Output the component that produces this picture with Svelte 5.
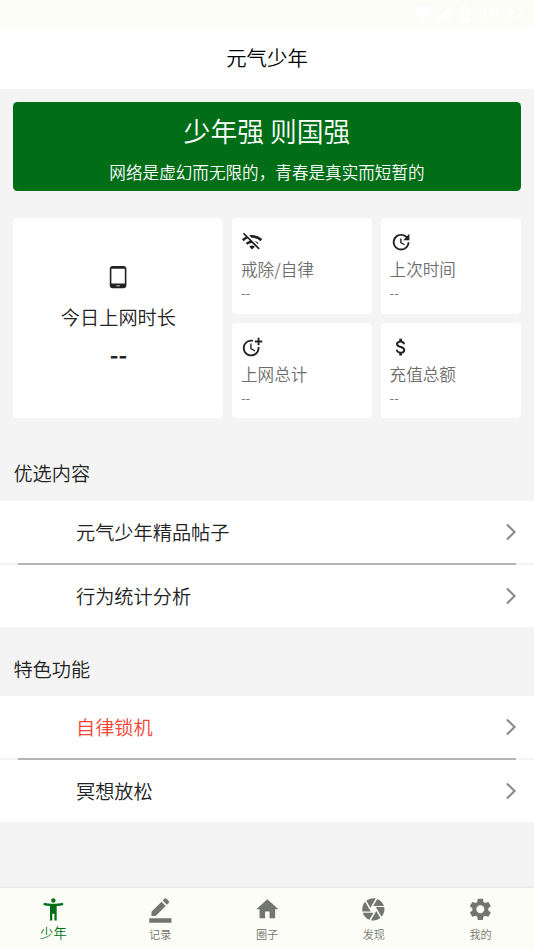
<script lang="ts">
	const icons = {
		tablet:
			'M18 0H6C4.34 0 3 1.34 3 3v18c0 1.66 1.34 3 3 3h12c1.66 0 3-1.34 3-3V3c0-1.66-1.34-3-3-3zm-4 22h-4v-1h4v1zm5.25-3H4.75V3h14.5v16z',
		wifiOff:
			'M22.99 9C19.15 5.16 13.8 3.76 8.84 4.78l2.52 2.52c3.47-.17 6.99 1.05 9.63 3.7l2-2zm-4 4c-1.29-1.29-2.84-2.13-4.49-2.56l3.53 3.53.96-.97zM2 3.05L5.07 6.1C3.6 6.82 2.22 7.78 1 9l1.99 2c1.24-1.24 2.67-2.16 4.2-2.77l2.24 2.24C7.81 10.89 6.27 11.73 5 13v.01L6.99 15c1.36-1.36 3.14-2.04 4.92-2.06L18.98 20l1.27-1.26L3.29 1.79 2 3.05zM9 17l3 3 3-3c-1.65-1.66-4.34-1.66-6 0z',
		update:
			'M21 10.12h-6.78l2.74-2.82c-2.73-2.7-7.15-2.8-9.88-.1-2.73 2.71-2.73 7.08 0 9.79s7.15 2.71 9.88 0C18.32 15.65 19 14.08 19 12.1h2c0 1.98-.88 4.55-2.64 6.29-3.51 3.48-9.21 3.48-12.72 0-3.5-3.47-3.53-9.11-.02-12.58s9.14-3.47 12.65 0L21 3v7.12zM12.5 8v4.25l3.5 2.08-.72 1.21L11 13V8h1.5z',
		moreTime:
			'M10 8v6l4.7 2.9.8-1.2-4-2.4V8zM17.92 12c.05.33.08.66.08 1 0 3.9-3.1 7-7 7s-7-3.1-7-7c0-3.9 3.1-7 7-7 .7 0 1.37.1 2 .29V4.23c-.64-.15-1.31-.23-2-.23-5 0-9 4-9 9s4 9 9 9 9-4 9-9c0-.34-.02-.67-.06-1h-2.02zM20 5V2h-2v3h-3v2h3v3h2V7h3V5z',
		money:
			'M11.8 10.9c-2.27-.59-3-1.2-3-2.15 0-1.09 1.01-1.85 2.7-1.85 1.78 0 2.44.85 2.5 2.1h2.21c-.07-1.72-1.12-3.3-3.21-3.81V3h-3v2.16c-1.94.42-3.5 1.68-3.5 3.61 0 2.31 1.91 3.46 4.7 4.13 2.5.6 3 1.48 3 2.41 0 .69-.49 1.79-2.7 1.79-2.06 0-2.87-.92-2.98-2.1h-2.2c.12 2.19 1.76 3.42 3.68 3.83V21h3v-2.15c1.95-.37 3.5-1.5 3.5-3.55 0-2.84-2.43-3.81-4.7-4.4z',
		chevron: 'M6.23 20.23L8 22l10-10L8 2 6.23 3.77 14.46 12z',
		person:
			'M20.5 6c-2.61.7-5.67 1-8.5 1s-5.89-.3-8.5-1L3 8c1.86.5 4 .83 6 1v13h2v-6h2v6h2V9c2-.17 4.14-.5 6-1l-.5-2zM12 6c1.1 0 2-.9 2-2s-.9-2-2-2-2 .9-2 2 .9 2 2 2z',
		pencil:
			'M22 24H2v-4h20v4zM13.06 5.19l3.75 3.75L7.75 18H4v-3.75l9.06-9.06zm4.82 2.68l-3.75-3.75 1.83-1.83c.39-.39 1.02-.39 1.41 0l2.34 2.34c.39.39.39 1.02 0 1.41l-1.83 1.83z',
		home: 'M10 20v-6h4v6h5v-8h3L12 3 2 12h3v8z',
		camera:
			'M9.4 10.5l4.77-8.26C13.47 2.09 12.75 2 12 2c-2.4 0-4.6.85-6.32 2.25l3.66 6.35.06-.1zM21.54 9c-.92-2.92-3.15-5.26-6-6.34L11.88 9h9.66zm.26 1h-7.49l.29.5 4.76 8.25C21 16.97 22 14.61 22 12c0-.69-.07-1.35-.2-2zM8.54 12l-3.9-6.75C3.01 7.03 2 9.39 2 12c0 .69.07 1.35.2 2h7.49l-1.15-2zm-6.08 3c.92 2.92 3.15 5.26 6 6.34L12.12 15H2.46zm11.27 0l-3.9 6.76c.7.15 1.42.24 2.17.24 2.4 0 4.6-.85 6.32-2.25l-3.66-6.35-.93 1.6z',
		settings:
			'M19.14 12.94c.04-.3.06-.61.06-.94 0-.32-.02-.64-.07-.94l2.03-1.58c.18-.14.23-.41.12-.61l-1.92-3.32c-.12-.22-.37-.29-.59-.22l-2.39.96c-.5-.38-1.03-.7-1.62-.94l-.36-2.54c-.04-.24-.24-.41-.48-.41h-3.84c-.24 0-.43.17-.47.41l-.36 2.54c-.59.24-1.13.57-1.62.94l-2.39-.96c-.22-.08-.47 0-.59.22L2.74 8.87c-.12.21-.08.47.12.61l2.03 1.58c-.05.3-.09.63-.09.94s.02.64.07.94l-2.03 1.58c-.18.14-.23.41-.12.61l1.92 3.32c.12.22.37.29.59.22l2.39-.96c.5.38 1.03.7 1.62.94l.36 2.54c.05.24.24.41.48.41h3.84c.24 0 .44-.17.47-.41l.36-2.54c.59-.24 1.13-.56 1.62-.94l2.39.96c.22.08.47 0 .59-.22l1.92-3.32c.12-.22.07-.47-.12-.61l-2.01-1.58zM12 15.6c-1.98 0-3.6-1.62-3.6-3.6s1.62-3.6 3.6-3.6 3.6 1.62 3.6 3.6-1.62 3.6-3.6 3.6z'
	};

	const stats = [
		{ icon: icons.wifiOff, label: '戒除/自律', value: '--' },
		{ icon: icons.update, label: '上次时间', value: '--' },
		{ icon: icons.moreTime, label: '上网总计', value: '--' },
		{ icon: icons.money, label: '充值总额', value: '--' }
	];

	const sections = [
		{
			title: '优选内容',
			items: [{ text: '元气少年精品帖子' }, { text: '行为统计分析' }]
		},
		{
			title: '特色功能',
			items: [{ text: '自律锁机', danger: true }, { text: '冥想放松' }]
		}
	];

	const tabs = [
		{ icon: icons.person, label: '少年' },
		{ icon: icons.pencil, label: '记录' },
		{ icon: icons.home, label: '圈子' },
		{ icon: icons.camera, label: '发现' },
		{ icon: icons.settings, label: '我的' }
	];
	let active = $state(0);
</script>

{#snippet icon(path: string)}
	<svg viewBox="0 0 24 24" fill="currentColor" aria-hidden="true"><path d={path} /></svg>
{/snippet}

<div class="app">
	<div class="status-bar">
		<svg class="signal" viewBox="0 0 58 20" fill="currentColor">
			<path d="M0 5.5Q10 -2 20 5.5L10 18z" />
			<path d="M37 2v16H21z" />
			<path d="M50 1h4v1.5h3V18H47V2.5h3zM53 5l-3 6h2v4l3.5-6h-2.5z" fill-rule="evenodd" />
		</svg>
		<span>10:22</span>
	</div>
	<header>元气少年</header>

	<main>
		<div class="banner">
			<div class="banner-title">少年强 则国强</div>
			<div class="banner-text">网络是虚幻而无限的，青春是真实而短暂的</div>
		</div>

		<div class="overview">
			<div class="card today">
				{@render icon(icons.tablet)}
				<div class="today-label">今日上网时长</div>
				<div class="today-value">--</div>
			</div>
			{#each stats as stat}
				<div class="card stat">
					{@render icon(stat.icon)}
					<div class="stat-label">{stat.label}</div>
					<div class="stat-value">{stat.value}</div>
				</div>
			{/each}
		</div>

		{#each sections as section}
			<section>
				<h2>{section.title}</h2>
				<div class="list">
					{#each section.items as item, i}
						{#if i > 0}
							<div class="divider"></div>
						{/if}
						<div class="row" class:danger={item.danger}>
							<span>{item.text}</span>
							{@render icon(icons.chevron)}
						</div>
					{/each}
				</div>
			</section>
		{/each}
	</main>

	<nav>
		{#each tabs as tab, i}
			<button class:active={active === i} onclick={() => (active = i)}>
				{@render icon(tab.icon)}
				<span>{tab.label}</span>
			</button>
		{/each}
	</nav>
</div>

<style>
	:global(body) {
		margin: 0;
	}

	.app {
		display: flex;
		flex-direction: column;
		height: 950px;
		overflow: hidden;
		background: #f4f4f4;
		color: #222;
		font-family: 'Noto Sans CJK SC', sans-serif;
		font-weight: 350;
	}

	svg {
		display: block;
		flex-shrink: 0;
	}

	.status-bar {
		display: flex;
		align-items: center;
		justify-content: flex-end;
		gap: 8px;
		box-sizing: border-box;
		height: 27px;
		padding-right: 9px;
		background: #fcfdf6;
		color: #fff;
		font: 500 18px/27px Roboto, sans-serif;
	}

	.signal {
		width: 58px;
		height: 20px;
	}

	header {
		height: 62px;
		background: #fff;
		color: #000;
		font-size: 20.4px;
		line-height: 61px;
		text-align: center;
	}

	main {
		flex: 1;
	}

	.banner {
		box-sizing: border-box;
		height: 89px;
		margin: 13.4px 13.4px 0;
		border-radius: 4.5px;
		background: #006e17;
		color: #fff;
		text-align: center;
	}

	.banner-title {
		padding-top: 9px;
		font-size: 26.8px;
		line-height: 40px;
	}

	.banner-text {
		padding-top: 8.6px;
		font-size: 16.6px;
		line-height: 25px;
	}

	.overview {
		display: grid;
		grid-template-columns: 210px 140px 140px;
		grid-template-rows: 96px 95.5px;
		gap: 9px 8.6px;
		margin: 26.6px 13.4px 0;
	}

	.card {
		border-radius: 4.5px;
		background: #fff;
	}

	.today {
		display: flex;
		flex-direction: column;
		align-items: center;
		grid-row: span 2;
		padding-top: 48.5px;
	}

	.today svg,
	.stat svg {
		width: 22.2px;
		height: 22.2px;
	}

	.today-label {
		margin-top: 13px;
		font-size: 19.2px;
		line-height: 30px;
	}

	.today-value {
		margin-top: 7px;
		font-size: 23.5px;
		font-weight: 700;
		line-height: 30px;
	}

	.stat {
		padding: 12.7px 9px 0;
	}

	.stat-label {
		margin-top: 4px;
		color: #6e6e6e;
		font-size: 16.6px;
		line-height: 25px;
	}

	.stat-value {
		color: #6e6e6e;
		font-size: 13.3px;
		line-height: 22px;
	}

	section h2 {
		margin: 0;
		padding: 0 13.4px;
		font-size: 19.2px;
		font-weight: inherit;
		line-height: 30px;
	}

	section:nth-of-type(1) h2 {
		padding-top: 40px;
	}

	section:nth-of-type(2) h2 {
		padding-top: 26.4px;
	}

	.list {
		margin-top: 12.8px;
	}

	section:nth-of-type(2) .list {
		margin-top: 12.3px;
	}

	.row {
		display: flex;
		align-items: center;
		justify-content: space-between;
		height: 62.2px;
		padding: 0 13.4px 0 76px;
		background: #fff;
		font-size: 19.2px;
	}

	.row svg {
		width: 20px;
		height: 20px;
		color: #8a8a8a;
	}

	.danger span {
		color: #f44336;
	}

	.divider {
		height: 1.5px;
		margin: 0 18px;
		background: #b4b6b3;
	}

	nav {
		display: flex;
		height: 62px;
		background: #fcfdf6;
		box-shadow: 0 -1px 2px rgba(0, 0, 0, 0.08);
	}

	nav button {
		display: flex;
		flex: 1;
		flex-direction: column;
		align-items: center;
		padding: 8px 0 0;
		border: 0;
		background: none;
		color: #73756f;
		font-family: inherit;
		font-size: 11.1px;
		font-weight: inherit;
	}

	nav svg {
		width: 26.7px;
		height: 26.7px;
	}

	nav span {
		margin-top: 1.5px;
		line-height: 20px;
	}

	nav .active {
		color: #006e17;
		font-size: 13.3px;
	}

	nav .active span {
		margin-top: 0;
	}
</style>
